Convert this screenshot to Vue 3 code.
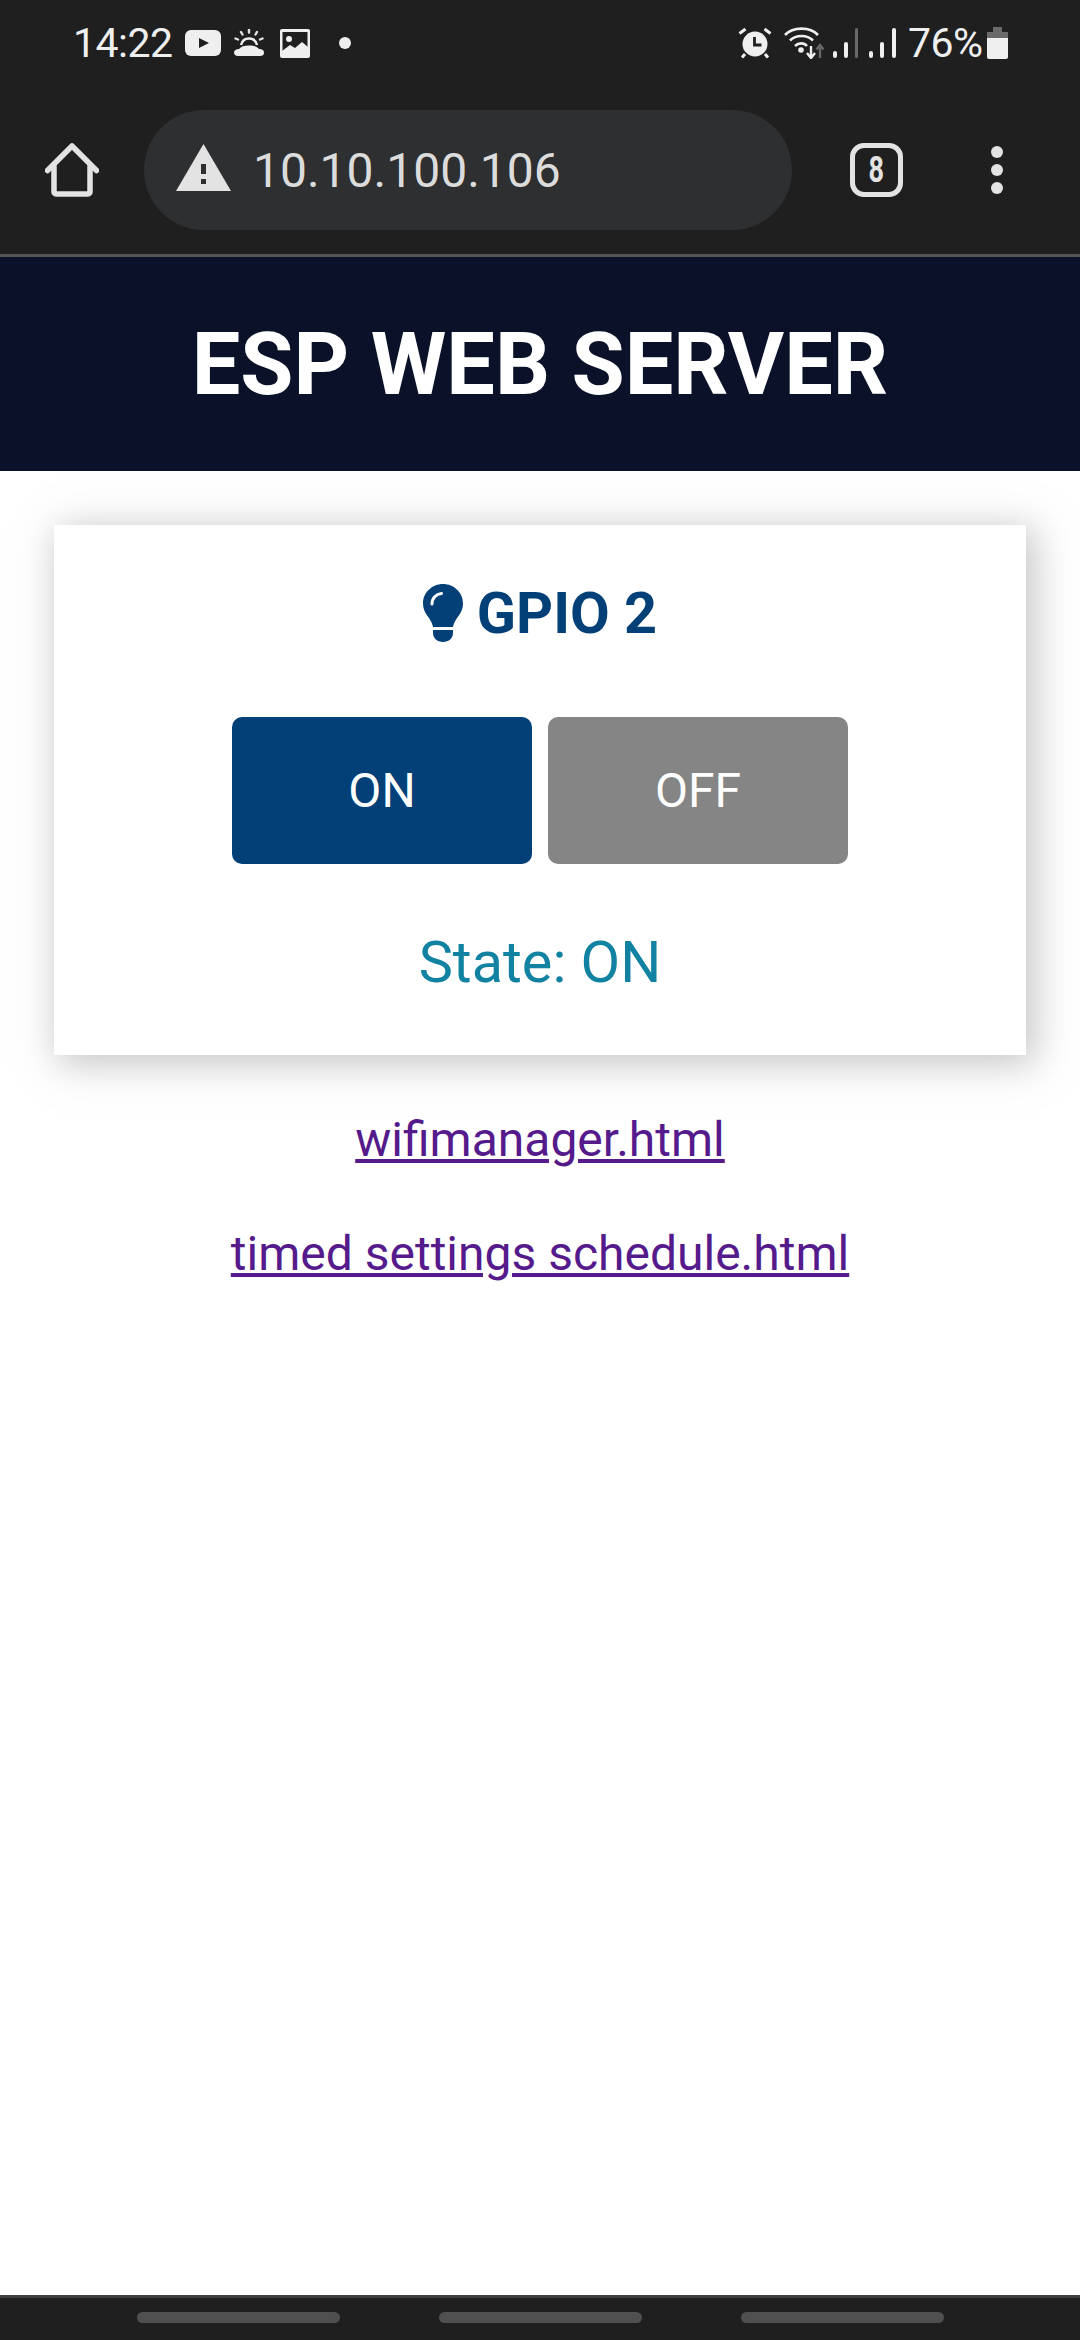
<script setup>
import { ref } from 'vue'

let gpio = ref('GPIO 2')
let state = ref('ON')
</script>

<template>
  <div class="page">
    <div class="chrome">
      <div class="status">
        <div class="status-left">
          <span class="time">14:22</span>
          <svg class="ic-yt" width="36" height="26" viewBox="0 0 36 26">
            <rect width="36" height="26" rx="6" fill="#efefef" />
            <path d="M14 8l10 5-10 5z" fill="#1f1f1f" />
          </svg>
          <svg class="ic-sun" width="30" height="28" viewBox="0 0 30 28">
            <path d="M4 27c-3 0-4-2-4-3.500S1.500 20 5 20c2-2.500 5-3.500 10-3.500s8 1 10 3.500c3.500 0 5 1.500 5 3.500S29 27 26 27z" fill="#efefef" />
            <path d="M7 16c1-4 4-6.500 8-6.500s7 2.500 8 6.500" fill="none" stroke="#efefef" stroke-width="2.400" />
            <path d="M15 0.500v3M7 3l1.500 2.500M23 3l-1.500 2.500M1.500 9.500l2.500 1M28.500 9.500l-2.500 1" stroke="#e4e4e4" stroke-width="2.400" stroke-linecap="round" />
          </svg>
          <svg class="ic-img" width="30" height="29" viewBox="0 0 30 29">
            <rect width="30" height="29" rx="2" fill="#efefef" />
            <rect x="2.500" y="3" width="25" height="23" fill="#1f1f1f" />
            <circle cx="9" cy="10" r="3" fill="#efefef" />
            <path d="M2 22l8-6 5 3 7-6 6 5v9H2z" fill="#efefef" />
          </svg>
          <span class="dot"></span>
        </div>
        <div class="status-right">
          <svg class="ic-alarm" width="34" height="32" viewBox="0 0 34 32">
            <circle cx="17" cy="17" r="12.500" fill="#efefef" />
            <path d="M1.500 6.500l6-4.500M32.500 6.500l-6-4.500M7 27l-3 3.500M27 27l3 3.500" stroke="#efefef" stroke-width="3" />
            <path d="M16.500 10v8h7" fill="none" stroke="#1f1f1f" stroke-width="2.800" />
          </svg>
          <svg class="ic-wifi" width="41" height="32" viewBox="0 0 41 32">
            <path d="M1 8C9-.5 26-.5 34 8M6 13.500c6-6 17-6 23 0M11 19c3.500-3.500 9-3.500 12 0" fill="none" stroke="#efefef" stroke-width="2.600" />
            <circle cx="17" cy="23" r="2.800" fill="#efefef" />
            <path d="M27 19v11M23 26l4 5 4-5" fill="none" stroke="#efefef" stroke-width="2.400" />
            <path d="M36 31V19M32.500 22.500l3.500-4.500 3.500 4.500" fill="none" stroke="#666" stroke-width="2.400" />
          </svg>
          <svg class="ic-sig" width="26" height="30" viewBox="0 0 26 30">
            <rect x="0" y="23" width="4" height="7" rx="2" fill="#efefef" />
            <rect x="11" y="14" width="4" height="16" rx="2" fill="#efefef" />
            <rect x="22" y="0" width="3" height="30" rx="1.500" fill="#6a6a6a" />
          </svg>
          <svg class="ic-sig2" width="27" height="30" viewBox="0 0 27 30">
            <rect x="0" y="23" width="4" height="7" rx="2" fill="#efefef" />
            <rect x="11" y="14" width="4" height="16" rx="2" fill="#efefef" />
            <rect x="23" y="0" width="4" height="30" rx="2" fill="#efefef" />
          </svg>
          <span class="batt-text">76%</span>
          <svg class="ic-batt" width="21" height="32" viewBox="0 0 21 32">
            <path d="M6 0h9v5h6v7H0V5h6z" fill="#6a6a6a" />
            <path d="M0 11h21v19a2 2 0 0 1-2 2H2a2 2 0 0 1-2-2z" fill="#efefef" />
          </svg>
        </div>
      </div>

      <div class="toolbar">
        <svg class="ic-home" width="54" height="54" viewBox="0 0 54 54">
          <path d="M2.500 27.500L27 3l24.500 24.500M9 23v26a2 2 0 0 0 2 2h32a2 2 0 0 0 2-2V23" fill="none" stroke="#e3e3e3" stroke-width="5.500" stroke-linecap="round" stroke-linejoin="round" />
        </svg>
        <div class="urlbar">
          <svg class="ic-warn" width="55" height="47" viewBox="0 0 55 47">
            <path d="M27.500 0L55 47H0z" fill="#e3e3e3" />
            <rect x="25" y="20" width="5" height="10" fill="#2e2f31" />
            <rect x="25" y="35" width="5" height="5" fill="#2e2f31" />
          </svg>
          <span class="url">10.10.100.106</span>
        </div>
        <div class="tabs"><span>8</span></div>
        <div class="menu">
          <span></span><span></span><span></span>
        </div>
      </div>
    </div>

    <div class="topnav">ESP WEB SERVER</div>

    <div class="content">
      <div class="card">
        <p class="card-title">
          <svg class="bulb" width="40" height="58" viewBox="0 0 40 58">
            <path d="M20 0C9 0 0 8.500 0 19.500c0 5 1.800 9 4.500 12.500 2.500 3.200 4.800 7 5.500 11h20c.7-4 3-7.800 5.500-11C38.200 28.500 40 24.500 40 19.500 40 8.500 31 0 20 0z" fill="#034078" />
            <path d="M10 46h20v3c0 5-4 9-10 9s-10-4-10-9z" fill="#034078" />
            <path d="M9 20c0-6 4-10 9.500-10.500" fill="none" stroke="#fff" stroke-width="3" stroke-linecap="round" />
          </svg>
          <span class="title-text">{{ gpio }}</span>
        </p>
        <div class="buttons">
          <button class="btn btn-on">ON</button>
          <button class="btn btn-off">OFF</button>
        </div>
        <p class="state">State: {{ state }}</p>
      </div>

      <a class="link first" href="#">wifimanager.html</a>
      <a class="link" href="#">timed settings schedule.html</a>
    </div>

    <div class="navbar">
      <span></span><span></span><span></span>
    </div>
  </div>
</template>

<style scoped>
.page {
  width: 1080px;
  height: 2340px;
  display: flex;
  flex-direction: column;
  background: #fff;
  font-family: Roboto, sans-serif;
  overflow: hidden;
}

.chrome {
  height: 254px;
  background: #1f1f1f;
  border-bottom: 3px solid #555;
}

.status {
  height: 86px;
  padding: 0 72px 0 73px;
  display: flex;
  justify-content: space-between;
  align-items: center;
}

.status-left,
.status-right {
  display: flex;
  align-items: center;
  color: #efefef;
}

.time {
  font-size: 41px;
  width: 112px;
  letter-spacing: -0.5px;
}

.ic-sun { margin-left: 13px; }
.ic-img { margin-left: 16px; }

.dot {
  width: 12px;
  height: 12px;
  border-radius: 50%;
  background: #efefef;
  margin-left: 29px;
}

.ic-wifi { margin-left: 12px; }
.ic-sig { margin-left: 8px; }
.ic-sig2 { margin-left: 10px; }

.batt-text {
  font-size: 41px;
  margin-left: 12px;
  width: 79px;
  white-space: nowrap;
  letter-spacing: -0.5px;
}

.toolbar {
  height: 120px;
  margin-top: 24px;
  padding-left: 45px;
  display: flex;
  align-items: center;
}

.urlbar {
  width: 648px;
  height: 120px;
  margin-left: 45px;
  border-radius: 60px;
  background: #2e2f31;
  display: flex;
  align-items: center;
  padding-left: 32px;
  box-sizing: border-box;
}

.ic-warn { margin-bottom: 6px; }

.url {
  font-size: 48px;
  color: #dcdcdc;
  margin-left: 22px;
}

.tabs {
  width: 53px;
  height: 54px;
  box-sizing: border-box;
  margin-left: 58px;
  border: 5px solid #e3e3e3;
  border-radius: 14px;
  color: #e3e3e3;
  font-size: 36px;
  font-weight: 700;
  display: flex;
  align-items: center;
  justify-content: center;
}

.tabs span {
  transform: scaleX(0.75);
}

.menu {
  margin-left: 88px;
  display: flex;
  flex-direction: column;
  gap: 6px;
}

.menu span {
  width: 12px;
  height: 12px;
  border-radius: 50%;
  background: #e3e3e3;
}

.topnav {
  height: 214px;
  background: #0a1128;
  color: #fff;
  font-size: 86.4px;
  font-weight: 700;
  display: flex;
  align-items: center;
  justify-content: center;
}

.content {
  flex: 1;
  display: flex;
  flex-direction: column;
  align-items: center;
}

.card {
  width: 972px;
  height: 530px;
  margin-top: 54px;
  background: #fff;
  box-shadow: 6px 6px 36px 3px rgba(140, 140, 140, 0.5);
  display: flex;
  flex-direction: column;
  align-items: center;
}

.card-title {
  margin: 59px 0 0;
  height: 58px;
  display: flex;
  align-items: center;
  gap: 14px;
  color: #034078;
  font-size: 57.6px;
  font-weight: 700;
}

.buttons {
  margin-top: 75px;
  display: flex;
  gap: 16px;
}

.btn {
  width: 300px;
  height: 147px;
  border: none;
  border-radius: 10px;
  color: #fff;
  font-family: Roboto, sans-serif;
  font-size: 48px;
  padding: 0;
}

.btn-on { background: #034078; }
.btn-off { background: #858585; }

.state {
  margin: 65px 0 0;
  color: #1282a2;
  font-size: 57.6px;
}

.link {
  color: #551a8b;
  font-size: 48px;
  text-decoration: underline;
}

.first { margin-top: 56px; }
.link + .link { margin-top: 57px; }

.navbar {
  height: 45px;
  background: #1f1f1f;
  border-top: 3px solid #3f3f3f;
  display: flex;
  justify-content: center;
  gap: 99px;
  padding-top: 14px;
  box-sizing: border-box;
}

.navbar span {
  width: 203px;
  height: 11px;
  border-radius: 6px;
  background: #505050;
}
</style>
